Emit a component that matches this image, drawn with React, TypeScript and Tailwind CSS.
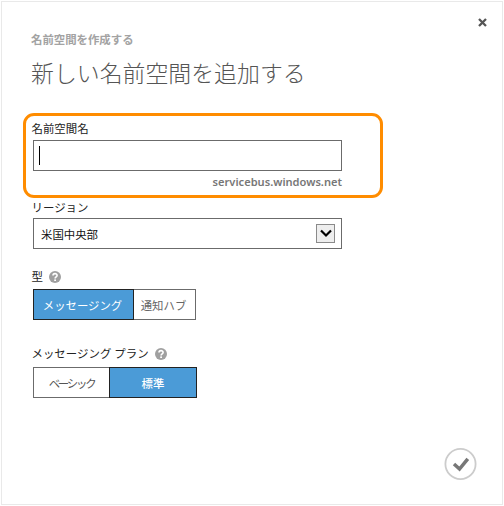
import type { ReactNode } from "react";

function HelpIcon() {
  return (
    <svg className="block h-3 w-3 shrink-0" viewBox="0 0 12 12" aria-hidden="true">
      <circle cx="6" cy="6" r="6" fill="#a0a0a0" />
      <path d="M4 4.6C4 2 8.1 2 8.1 4.4C8.1 5.8 6.1 5.8 6.1 7.5" fill="none" stroke="#fff" strokeWidth="1.6" />
      <rect x="5.2" y="8.4" width="1.8" height="1.6" fill="#fff" />
    </svg>
  );
}

function Label({ children, help }: { children: ReactNode; help?: boolean }) {
  return (
    <div className="flex h-4 items-center gap-1.5 pl-[0.5px] text-[11.45px] leading-4 whitespace-nowrap text-[#222]">
      {children}
      {help && <HelpIcon />}
    </div>
  );
}

export default function App() {
  return (
    <div className="h-[506px] w-[504px] bg-white p-px font-['Open_Sans','Noto_Sans_CJK_JP',sans-serif]">
      <main className="relative flex h-[504px] w-[502px] flex-col border border-[#e9e9e9] pl-[21px]">
        <button aria-label="閉じる" className="absolute top-4 right-[15px] h-[9px] w-[9px]">
          <svg className="block h-[9px] w-[9px]" viewBox="0 0 9 9">
            <path d="M1 1L8 8M8 1L1 8" stroke="#555" strokeWidth="2.3" />
          </svg>
        </button>

        <header className="h-[111px] pt-[30px] pl-2">
          <p className="h-4 text-[11.4px] leading-4 font-bold text-[#a3a3a3]">名前空間を作成する</p>
          <h1 className="mt-[10px] h-8 text-[22.9px] leading-8 font-light text-[#555]">新しい名前空間を追加する</h1>
        </header>

        <section className="h-[85px] w-[360px] rounded-[11px] border-[3px] border-[#ff8c00] pt-[5px] pl-[5px]">
          <Label>名前空間名</Label>
          <div className="mt-[3px] ml-0.5 flex h-[31px] w-[309px] items-center border border-[#6b6b6b] pl-[5px]">
            <span className="h-[19px] w-px bg-black" />
          </div>
          <p className="mt-[3px] w-[311px] text-right font-['Noto_Sans',sans-serif] text-[11.1px] leading-4 font-semibold text-[#777]">servicebus.windows.net</p>
        </section>

        <section className="mt-0.5 pl-2">
          <Label>リージョン</Label>
          <div className="mt-0.5 ml-0.5 flex h-[31px] w-[309px] items-center justify-between border border-[#6b6b6b] pr-1.5 pl-[7px] text-[11.4px] text-[#111]">
            <span className="pt-0.5">米国中央部</span>
            <span className="flex h-[19px] w-[19px] items-center justify-center border border-[#8a8a8a] bg-[#eee]">
              <svg className="block h-[9px] w-3" viewBox="0 0 12 9">
                <path d="M1 1.5L6 6.5L11 1.5" fill="none" stroke="#000" strokeWidth="2.2" />
              </svg>
            </span>
          </div>
        </section>

        <section className="mt-5 pl-2">
          <Label help>型</Label>
          <div className="mt-1 ml-0.5 flex h-[31px] text-[11.4px] whitespace-nowrap">
            <button className="z-10 w-[101px] border border-[#222] bg-[#4b9bd7] pt-0.5 pr-0.5 text-white">メッセージング</button>
            <button className="-ml-px w-[63px] border border-[#6b6b6b] pt-0.5 pr-0.5 text-[#666]">通知ハブ</button>
          </div>
        </section>

        <section className="mt-[26px] pl-2">
          <Label help>
            <span>メッセージング プラン</span>
          </Label>
          <div className="mt-[5px] ml-0.5 flex h-[31px] text-[11.4px] whitespace-nowrap">
            <button className="w-[77px] border border-[#6b6b6b] pt-0.5 tracking-[-2.2px] text-[#555]">ベーシック</button>
            <button className="z-10 -ml-px w-[88px] border border-[#222] bg-[#4b9bd7] pt-0.5 font-medium text-white">標準</button>
          </div>
        </section>

        <button aria-label="完了" className="mt-auto mr-[25px] mb-6 self-end">
          <svg className="block h-8 w-[33px]" viewBox="0 0 33 32">
            <circle cx="16.5" cy="16" r="15.1" fill="none" stroke="#ccc" strokeWidth="1.8" />
            <path d="M10 16L15.5 21L23.8 10.8" fill="none" stroke="#777" strokeWidth="3.5" />
          </svg>
        </button>
      </main>
    </div>
  );
}
